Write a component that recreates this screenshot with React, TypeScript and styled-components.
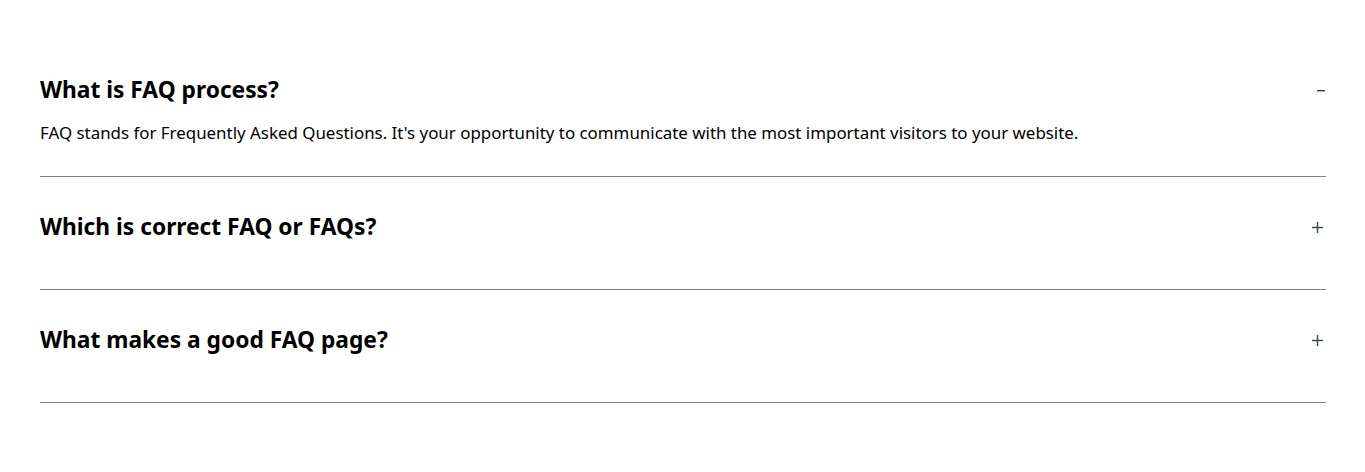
import React, { useState } from "react";
import styled, { createGlobalStyle } from "styled-components";

const GlobalStyle = createGlobalStyle`
  html, body { margin: 0; padding: 0; background: #ffffff; }
  body { font-family: "Noto Sans", "Open Sans", sans-serif; color: #000; }
`;

const Wrapper = styled.div`
  padding: 40px 39px 0 40px;
  display: flex;
  flex-direction: column;
`;

const Item = styled.div`
  border-bottom: 1px solid #808080;
  padding: 35px 0 31px;
  display: flex;
  flex-direction: column;
`;

const Header = styled.button`
  all: unset;
  display: flex;
  align-items: center;
  justify-content: space-between;
  cursor: pointer;
  height: 30px;
  margin-bottom: 16px;
`;

const Question = styled.h3`
  margin: 0;
  font-size: 22.75px;
  font-weight: 700;
  line-height: 30px;
  color: #000;
`;

const Toggle = styled.svg<{ $open: boolean }>`
  display: block;
  width: ${(p) => (p.$open ? "8px" : "11px")};
  height: 11px;
  margin-right: ${(p) => (p.$open ? "1px" : "3px")};
  color: #2a4a4a;
`;

const Answer = styled.p`
  margin: 0;
  font-size: 16.9px;
  line-height: 24px;
`;

const faqs = [
  {
    q: "What is FAQ process?",
    a: "FAQ stands for Frequently Asked Questions. It's your opportunity to communicate with the most important visitors to your website.",
  },
  {
    q: "Which is correct FAQ or FAQs?",
    a: "Both are acceptable; FAQs is commonly used when referring to multiple questions.",
  },
  {
    q: "What makes a good FAQ page?",
    a: "A good FAQ page is clear, concise, easy to navigate and answers the questions your visitors actually ask.",
  },
];

export default function App() {
  const [open, setOpen] = useState<number>(0);
  return (
    <>
      <GlobalStyle />
      <Wrapper>
        {faqs.map((f, i) => {
          const isOpen = open === i;
          return (
            <Item key={f.q}>
              <Header onClick={() => setOpen(isOpen ? -1 : i)}>
                <Question>{f.q}</Question>
                {isOpen ? (
                  <Toggle $open viewBox="0 0 8 11" aria-label="collapse">
                    <rect x="0" y="5" width="8" height="1.4" fill="currentColor" />
                  </Toggle>
                ) : (
                  <Toggle $open={false} viewBox="0 0 11 11" aria-label="expand">
                    <rect x="0" y="4.8" width="11" height="1.4" fill="currentColor" />
                    <rect x="4.8" y="0" width="1.4" height="11" fill="currentColor" />
                  </Toggle>
                )}
              </Header>
              {isOpen && <Answer>{f.a}</Answer>}
            </Item>
          );
        })}
      </Wrapper>
    </>
  );
}
